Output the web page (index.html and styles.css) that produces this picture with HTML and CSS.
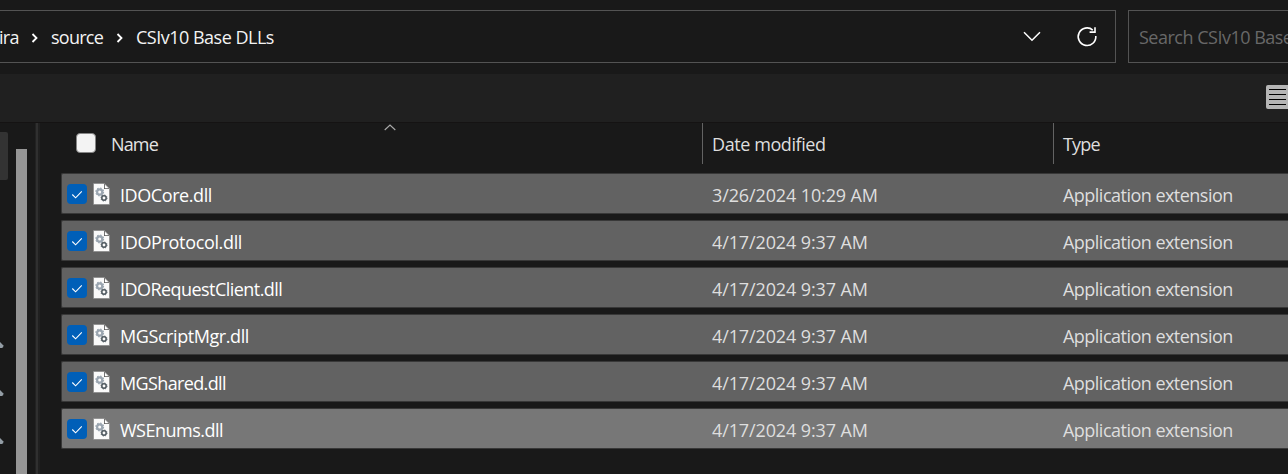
FILE: index.html
```html
<!DOCTYPE html>
<html lang="en">
<head>
<meta charset="utf-8">
<title>CSIv10 Base DLLs</title>
<link rel="stylesheet" href="styles.css">
</head>
<body>
<svg class="defs" aria-hidden="true">
  <symbol id="dll" viewBox="0 0 17 22">
    <path d="M.5 .5H11.5L16.5 5.5V21.5H.5Z" fill="#fafafa" stroke="#858585" stroke-width=".7"/>
    <path d="M11 .5V6H16.5Z" fill="#555"/>
    <path d="M11.8 1.4V5.3H15.6Z" fill="#fff"/>
    <circle cx="6.7" cy="9" r="2.6" fill="none" stroke="#9aa5b0" stroke-width="2.2"/>
    <circle cx="6.7" cy="9" r="3.9" fill="none" stroke="#9aa5b0" stroke-width="1.1" stroke-dasharray="1.53 1.53"/>
    <circle cx="11" cy="15" r="2.2" fill="none" stroke="#4d575e" stroke-width="1.5"/>
    <circle cx="11" cy="15" r="3.1" fill="none" stroke="#4d575e" stroke-width=".8" stroke-dasharray="1.22 1.22"/>
  </symbol>
  <symbol id="tick" viewBox="0 0 20 20">
    <path d="M5.3 10.5L8.6 13.8L14.8 7.4" fill="none" stroke="#fff" stroke-width="1.1"/>
  </symbol>
  <symbol id="crumb" viewBox="0 0 8 10">
    <path d="M1.5 1L5.5 5L1.5 9" fill="none" stroke="#fff" stroke-width="1.8"/>
  </symbol>
  <symbol id="pin" viewBox="0 0 4 7">
    <path d="M0 0L3.2 3.2Q4 5.5 2 6H0Z" fill="#939da5"/>
  </symbol>
</svg>
<header class="nav">
  <div class="address">
    <span class="crumb c-ira">ira</span>
    <svg class="sep"><use href="#crumb"/></svg>
    <span class="crumb c-source">source</span>
    <svg class="sep"><use href="#crumb"/></svg>
    <span class="crumb c-base">CSIv10 Base DLLs</span>
    <svg class="chevron" viewBox="0 0 18 11"><path d="M1 1.2L9 9.2L17 1.2" fill="none" stroke="#fff" stroke-width="1.5"/></svg>
    <svg class="refresh" viewBox="0 0 22 22"><path d="M16.8 4.1A8.8 8.8 0 1 0 19.8 10M19 1.2V6.1H13.6" fill="none" stroke="#fff" stroke-width="1.6"/></svg>
  </div>
  <div class="search"><span class="s-search">Search CSIv10 Base</span></div>
</header>
<div class="toolbar">
  <svg class="view" viewBox="0 0 24 24"><rect width="24" height="24" rx="2" fill="#b5b5b5"/><path d="M3 4.5H20M3 9.5H20M3 14.5H20M3 19.5H20" stroke="#000"/></svg>
</div>
<div class="body">
  <aside class="side">
    <div class="tile"></div>
    <svg class="pin"><use href="#pin"/></svg>
    <svg class="pin"><use href="#pin"/></svg>
    <svg class="pin"><use href="#pin"/></svg>
  </aside>
  <div class="scroll"><div class="thumb"></div></div>
  <div class="splitter"></div>
  <main class="list">
    <div class="head">
      <div class="h-name"><span class="box"></span><span class="t-name">Name</span>
        <svg class="sort" viewBox="0 0 12 7"><path d="M.7 6L6 1L11.3 6" fill="none" stroke="#aaa" stroke-width="1.1"/></svg></div>
      <div class="h-col"><span class="t-date">Date modified</span></div>
      <div class="h-col"><span class="t-type">Type</span></div>
    </div>
    <div class="rows">
      <div class="row"><svg class="check"><use href="#tick"/></svg><svg class="file"><use href="#dll"/></svg><span class="name n1">IDOCore.dll</span><span class="date">3/26/2024 10:29 AM</span><span class="type">Application extension</span></div>
      <div class="row"><svg class="check"><use href="#tick"/></svg><svg class="file"><use href="#dll"/></svg><span class="name n2">IDOProtocol.dll</span><span class="date">4/17/2024 9:37 AM</span><span class="type">Application extension</span></div>
      <div class="row"><svg class="check"><use href="#tick"/></svg><svg class="file"><use href="#dll"/></svg><span class="name n3">IDORequestClient.dll</span><span class="date">4/17/2024 9:37 AM</span><span class="type">Application extension</span></div>
      <div class="row"><svg class="check"><use href="#tick"/></svg><svg class="file"><use href="#dll"/></svg><span class="name n4">MGScriptMgr.dll</span><span class="date">4/17/2024 9:37 AM</span><span class="type">Application extension</span></div>
      <div class="row"><svg class="check"><use href="#tick"/></svg><svg class="file"><use href="#dll"/></svg><span class="name n5">MGShared.dll</span><span class="date">4/17/2024 9:37 AM</span><span class="type">Application extension</span></div>
      <div class="row focus"><svg class="check"><use href="#tick"/></svg><svg class="file"><use href="#dll"/></svg><span class="name n6">WSEnums.dll</span><span class="date">4/17/2024 9:37 AM</span><span class="type">Application extension</span></div>
    </div>
  </main>
</div>
</body>
</html>
```
FILE: styles.css
```css
* { box-sizing: border-box; }
body {
  margin: 0;
  width: 1288px;
  height: 474px;
  overflow: hidden;
  background: #191919;
  color: #fff;
  font: 18px/24px "Open Sans", "Noto Sans", sans-serif;
  white-space: nowrap;
}
svg { display: block; flex: none; }
.defs { width: 0; height: 0; position: absolute; }

.nav { display: flex; gap: 12px; height: 74px; padding-top: 10px; overflow: hidden; }
.address {
  display: flex;
  flex: none;
  align-items: center;
  width: 1116px;
  height: 53px;
  border: 1px solid #535353;
  border-left: 0;
}
.crumb { flex: none; color: #f3f3f3; }
.c-ira { width: 18px; margin-left: -1px; letter-spacing: -.7px; }
.sep { width: 8px; height: 10px; margin: 2px 12px 0 14px; }
.c-source { width: 52px; letter-spacing: -.75px; }
.c-source + .sep { margin: 2px 12px 0 13px; }
.c-base { width: 140px; letter-spacing: -.5px; }
.chevron { width: 18px; height: 11px; margin-left: auto; }
.refresh { width: 22px; height: 22px; margin: 0 17px 0 35px; }
.search {
  flex: none;
  width: 260px;
  height: 53px;
  padding: 14px 0 0 10px;
  border: 1px solid #535353;
  color: #686868;
  letter-spacing: -.5px;
}

.toolbar {
  display: flex;
  height: 49px;
  padding: 11px 0 0 1266px;
  background: #202020;
  border-bottom: 1px solid #151313;
}
.view { width: 24px; height: 24px; }

.body { display: flex; height: 351px; }
.side { width: 16px; padding-top: 9px; }
.tile { width: 8px; height: 48px; background: #333; border-radius: 0 2px 2px 0; }
.pin { width: 4px; height: 7px; margin-bottom: 41px; }
.tile + .pin { margin-top: 162px; }
.scroll { width: 19px; padding-top: 26px; }
.thumb { width: 11px; height: 325px; background: #969696; }
.splitter { width: 5px; background: linear-gradient(90deg, #222 1px, #303030 1px 3px, #202020 3px); }

.list { flex: 1; min-width: 0; padding-left: 21px; }
.head { display: grid; grid-template-columns: 641px 351px 235px; height: 41px; }
.h-name { display: flex; align-items: flex-start; padding: 10px 0 0 15px; }
.h-name .box { width: 20px; height: 20px; background: #f3f3f3; border: 1px solid #858585; border-radius: 4px; }
.t-name { width: 48px; margin: -1px 0 0 15px; color: #e4e4e4; letter-spacing: -.85px; }
.sort { width: 12px; height: 7px; margin: -9px 0 0 225px; }
.h-col { padding: 9px 0 0 9px; border-left: 1px solid #636363; color: #dedede; }
.t-date { letter-spacing: -.42px; }
.t-type { letter-spacing: -.8px; }

.rows { display: grid; gap: 6px; padding-top: 9px; }
.row {
  display: grid;
  grid-template-columns: 20px 17px 591px 351px 1fr;
  align-items: start;
  height: 41px;
  padding: 10px 0 0 5px;
  background: #626262;
  border: 1px solid #383838;
  border-right: 0;
  border-radius: 2px 0 0 2px;
}
.focus { background: #777; }
.check { width: 20px; height: 20px; background: #005fb8; border-radius: 4px; }
.file { width: 17px; height: 22px; margin: -1px 0 0 6px; }
.name { padding-left: 16px; margin-top: -1px; }
.n1 { letter-spacing: -.42px; }
.n2 { letter-spacing: -.34px; }
.n3 { letter-spacing: -.55px; }
.n4 { letter-spacing: -.42px; }
.n5 { letter-spacing: -.63px; }
.n6 { letter-spacing: -.5px; }
.date, .type { color: #dedede; margin: -1px 0 0 17px; }
.date { letter-spacing: -.12px; }
.type { letter-spacing: -.52px; }
```
